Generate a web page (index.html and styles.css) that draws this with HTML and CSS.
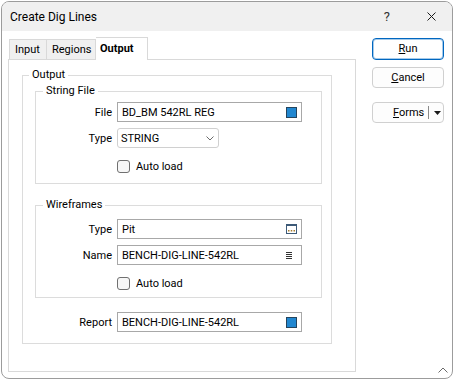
FILE: index.html
```html
<!DOCTYPE html>
<html lang="en">
<head>
    <meta charset="UTF-8">
    <meta name="viewport" content="width=device-width, initial-scale=1.0">
    <title>Create Dig Lines</title>
    <link rel="stylesheet" href="styles.css">
</head>
<body>

    <div class="window">

        <!-- Title bar -->
        <div class="titlebar">
            <span class="title">Create Dig Lines</span>
            <span class="help">?</span>
            <svg class="close" width="9" height="9" viewBox="0 0 9 9">
                <path d="M0.5 0.5 L8.5 8.5 M8.5 0.5 L0.5 8.5" stroke="#1b1b1b" stroke-width="1" fill="none"/>
            </svg>
        </div>

        <div class="main">

            <!-- Tabs + panel -->
            <div class="left">
                <div class="tabs">
                    <span class="tab tab-input">Input</span>
                    <span class="tab tab-regions">Regions</span>
                    <span class="tab tab-output active">Output</span>
                </div>

                <div class="panel">
                    <fieldset class="group output">
                        <legend>Output</legend>

                        <fieldset class="group sub string-file">
                            <legend>String File</legend>
                            <div class="row">
                                <label>File</label>
                                <div class="field">BD_BM 542RL REG<span class="color-box"></span></div>
                            </div>
                            <div class="row gap">
                                <label>Type</label>
                                <div class="select">
                                    STRING
                                    <svg width="8" height="5" viewBox="0 0 8 5">
                                        <path d="M0.5 0.5 L4 4 L7.5 0.5" stroke="#6b6b6b" stroke-width="1" fill="none"/>
                                    </svg>
                                </div>
                            </div>
                            <div class="row check">
                                <span class="checkbox"></span><span class="check-label">Auto load</span>
                            </div>
                        </fieldset>

                        <fieldset class="group sub wireframes">
                            <legend>Wireframes</legend>
                            <div class="row">
                                <label>Type</label>
                                <div class="field">Pit
                                    <svg width="11" height="10" viewBox="0 0 11 10">
                                        <rect x="0.5" y="0.5" width="10" height="9" fill="#fff" stroke="#3d5a78"/>
                                        <rect x="0" y="0" width="11" height="2" fill="#3d5a78"/>
                                        <rect x="2" y="6" width="1.5" height="1.5" fill="#a57b2c"/>
                                        <rect x="4.75" y="6" width="1.5" height="1.5" fill="#a57b2c"/>
                                        <rect x="7.5" y="6" width="1.5" height="1.5" fill="#a57b2c"/>
                                    </svg>
                                </div>
                            </div>
                            <div class="row gap">
                                <label>Name</label>
                                <div class="field">BENCH-DIG-LINE-542RL
                                    <svg class="list-icon" width="6" height="7" viewBox="0 0 6 7">
                                        <path d="M0 0.5 H6 M0 2.5 H6 M0 4.5 H6 M0 6.5 H6" stroke="#333" stroke-width="1"/>
                                    </svg>
                                </div>
                            </div>
                            <div class="row check">
                                <span class="checkbox"></span><span class="check-label">Auto load</span>
                            </div>
                        </fieldset>

                        <div class="row report">
                            <label>Report</label>
                            <div class="field">BENCH-DIG-LINE-542RL<span class="color-box"></span></div>
                        </div>
                    </fieldset>
                </div>
            </div>

            <!-- Buttons -->
            <div class="buttons">
                <div class="btn default"><u>R</u>un</div>
                <div class="btn cancel"><u>C</u>ancel</div>
                <div class="btn split">
                    <span><u>F</u>orms</span>
                    <span class="sep"></span>
                    <svg width="7" height="4" viewBox="0 0 7 4"><path d="M0 0 H7 L3.5 4 Z" fill="#1b1b1b"/></svg>
                </div>
            </div>
        </div>

        <svg class="grip" width="10" height="6" viewBox="0 0 10 6">
            <path d="M0.5 5.5 L5 1 L9.5 5.5" stroke="#6a6a6a" stroke-width="1" fill="none"/>
        </svg>
    </div>

</body>
</html>
```

FILE: styles.css
```css
body {
    margin: 0;
    font-family: Roboto, "Liberation Sans", sans-serif;
    font-size: 11px;
    color: #000;
    background: #fff;
}

.window {
    margin: 1px 0 0 1px;
    width: 452px;
    height: 378px;
    box-sizing: border-box;
    border: 1px solid #9c9c9c;
    border-radius: 8px;
    overflow: hidden;
    position: relative;
    background: #fff;
}

/* TITLE BAR */
.titlebar {
    height: 29px;
    background: #f0f0f0;
    display: flex;
    align-items: center;
    padding: 0 16px 0 8px;
}

.title {
    flex: 1;
    font-size: 12px;
}

.help {
    font-size: 13px;
    color: #333;
    margin-right: 37px;
}

.close {
    display: block;
}

.main {
    display: flex;
    padding: 6px 8px 0 6px;
}

.left {
    width: 348px;
}

/* TABS */
.tabs {
    display: flex;
    align-items: flex-end;
    height: 22px;
    padding-left: 1px;
}

.tab {
    height: 20px;
    box-sizing: border-box;
    border-top: 1px solid #d9d9d9;
    border-right: 1px solid #d9d9d9;
    background: #f0f0f0;
    padding-left: 5px;
    line-height: 19px;
}

.tab-input {
    width: 38px;
    border-left: 1px solid #d9d9d9;
}

.tab-regions {
    width: 49px;
}

.tab-output {
    width: 52px;
    padding-left: 4px;
}

.tab.active {
    height: 23px;
    margin-bottom: -1px;
    background: #fff;
    font-weight: bold;
    line-height: 21px;
    position: relative;
    z-index: 1;
}

.panel {
    height: 313px;
    box-sizing: border-box;
    border: 1px solid #d9d9d9;
    padding: 7px 0 0 13px;
}

/* GROUPS */
.group {
    margin: 0;
    padding: 0;
    border: 1px solid #dcdcdc;
    min-width: 0;
}

.group legend {
    padding: 0 3px;
    margin-left: 6px;
    line-height: 16px;
}

.output {
    width: 310px;
    box-sizing: border-box;
    padding-bottom: 11px;
}

.sub {
    width: 287px;
    box-sizing: border-box;
    margin-left: 12px;
}

.sub legend {
    margin-left: 7px;
}

.string-file {
    padding: 3px 0 7px 0;
}

.wireframes {
    margin-top: 13px;
    padding: 6px 0 4px 0;
}

/* ROWS */
.row {
    display: flex;
    align-items: center;
    height: 20px;
}

.row label {
    width: 76px;
    margin-right: 5px;
    text-align: right;
}

.row.gap {
    margin-top: 6px;
}

.row.check {
    margin-top: 8px;
    padding-left: 81px;
}

.row.report {
    margin-top: 14px;
}

.row.report label {
    width: 89px;
}

.field {
    width: 185px;
    height: 20px;
    box-sizing: border-box;
    border: 1px solid #a8a8a8;
    display: flex;
    align-items: center;
    justify-content: space-between;
    padding: 0 4px;
}

.field svg {
    display: block;
}

.list-icon {
    margin-right: 5px;
}

.color-box {
    width: 11px;
    height: 11px;
    box-sizing: border-box;
    background: #2187d0;
    border: 1px solid #24445e;
}

.select {
    width: 102px;
    height: 20px;
    box-sizing: border-box;
    border: 1px solid #d0d0d0;
    border-radius: 3px;
    display: flex;
    align-items: center;
    justify-content: space-between;
    padding: 0 4px 0 3px;
}

.select svg {
    display: block;
}

.checkbox {
    width: 13px;
    height: 13px;
    box-sizing: border-box;
    border: 1px solid #707070;
    border-radius: 3px;
    background: #f7f7f7;
}

.check-label {
    margin-left: 6px;
}

/* BUTTONS */
.buttons {
    width: 72px;
    margin-left: 16px;
    padding-top: 1px;
    display: flex;
    flex-direction: column;
}

.btn {
    height: 21px;
    box-sizing: border-box;
    border: 1px solid #d0d0d0;
    border-radius: 4px;
    background: #fdfdfd;
    text-align: center;
    line-height: 19px;
}

.btn.default {
    height: 22px;
    border-color: #0067c0;
    box-shadow: inset 0 0 0 1px rgba(0, 103, 192, 0.35);
    background: #fff;
    line-height: 20px;
}

.btn.cancel {
    margin-top: 7px;
}

.btn.split {
    margin-top: 14px;
    display: flex;
    align-items: center;
    padding-left: 20px;
}

.btn.split .sep {
    width: 1px;
    height: 13px;
    background: #8a8a8a;
    margin-left: 4px;
    margin-right: 5px;
}

.btn.split svg {
    display: block;
}

.grip {
    position: absolute;
    right: 4px;
    bottom: 5px;
}
```
